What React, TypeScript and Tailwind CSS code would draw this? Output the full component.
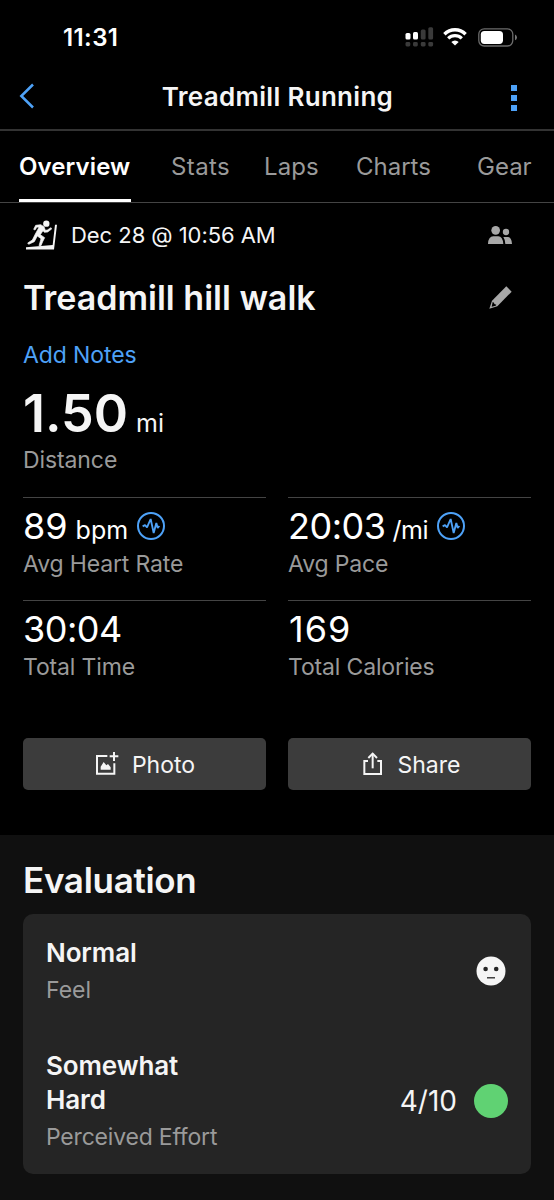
import type { ReactNode } from "react";

function SignalIcon() {
  return (
    <svg width="29" height="20" viewBox="0 0 29 20">
      <g fill="#fff">
        <rect x="0.5" y="6" width="5" height="6.5" rx="1.5" />
        <rect x="8" y="5" width="5" height="7.5" rx="1.5" />
      </g>
      <g fill="#3a3a3a">
        <rect x="15.8" y="2.5" width="4.8" height="10" rx="1.5" />
        <rect x="23.3" y="0.3" width="4.8" height="12.2" rx="1.5" />
        <rect x="0.5" y="15" width="4.8" height="4.5" rx="1.4" />
        <rect x="8" y="15" width="4.8" height="4.5" rx="1.4" />
        <rect x="15.8" y="15" width="4.8" height="4.5" rx="1.4" />
        <rect x="23.3" y="15" width="4.8" height="4.5" rx="1.4" />
      </g>
    </svg>
  );
}

function WifiIcon() {
  return (
    <svg width="24" height="18" viewBox="0 0 24 18" fill="none" stroke="#fff">
      <path d="M1.4 6.2 A15 15 0 0 1 22.6 6.2" strokeWidth="3.4" />
      <path d="M5.2 10.4 A9.8 9.8 0 0 1 18.8 10.4" strokeWidth="3.2" />
      <path d="M8.3 14 A5.2 5.2 0 0 1 15.7 14 L12 17.6 Z" fill="#fff" stroke="none" />
    </svg>
  );
}

function BatteryIcon() {
  return (
    <svg width="40" height="19" viewBox="0 0 40 19">
      <rect x="0.8" y="0.8" width="34" height="17.2" rx="5.4" fill="none" stroke="#6b6b6b" strokeWidth="1.3" />
      <rect x="2.8" y="2.9" width="22.2" height="13" rx="3.6" fill="#fff" />
      <path d="M37 6.5 Q39 7.4 39 9.4 Q39 11.4 37 12.3 Z" fill="#777" />
    </svg>
  );
}

function TreadmillIcon() {
  return (
    <svg width="34" height="32" viewBox="75 56 102 96" fill="#f5f5f5">
      <circle cx="139" cy="70" r="9.5" />
      <path d="M78 141 L158 134 L165 73 L171 73 L162 147.500 L78 147.500 Z" />
      <path
        d="M101 87 L107 75 L122 73 L132 79 L136 90 L142 89 L153 82 L155 86 L143 95 L133 96 L129 91 L121 103 L134 112 L128 124 L123 136 L117 136 L123 115 L112 107 L103 124 L86 132 L83 128 L97 119 L106 101 L117 81 L111 80 L105 89 Z"
        stroke="#f5f5f5"
        strokeWidth="2"
        strokeLinejoin="round"
      />
    </svg>
  );
}

function PeopleIcon() {
  return (
    <svg width="24" height="18" viewBox="0 0 72 54" fill="#a8a8a8">
      <circle cx="23" cy="13" r="13" />
      <path d="M0 54 Q1 31 16 31 H31 Q44 31 46 54 Z" />
      <circle cx="54" cy="18" r="9.5" />
      <path d="M46 33 H60 Q71 34 72 54 H52 Q51 40 46 33 Z" />
    </svg>
  );
}

function PencilIcon() {
  return (
    <svg width="23" height="23" viewBox="0 0 69 69">
      <path d="M52 1 L68 17 L25 61 L1 68 L9 44 Z" fill="#a8a8a8" />
      <path d="M11 48 L15 50 L16 54 L22 56 L20 59 L8 62 Z" fill="#000" />
    </svg>
  );
}

function PulseIcon() {
  return (
    <svg width="28" height="28" viewBox="0 0 84 84" fill="none" stroke="#4ea2f8">
      <circle cx="42" cy="42" r="39" strokeWidth="6" />
      <path
        d="M17 43 L24 39 L30 46 L41 21 L50 63 L58 33 L62 48 L67 42"
        strokeWidth="5.5"
        strokeLinejoin="bevel"
      />
    </svg>
  );
}

function AddPhotoIcon() {
  return (
    <svg width="24" height="24" viewBox="0 0 72 72">
      <path d="M34 12 H3 V65 H55 V34" fill="none" stroke="#f5f5f5" strokeWidth="6" />
      <path d="M54 0 V27 M41 13 H67" stroke="#f5f5f5" strokeWidth="6" />
      <path d="M14 53 V44 L23 30 L31 40 L36 36 L44 46 V53 Z" fill="#f5f5f5" />
    </svg>
  );
}

function ShareIcon() {
  return (
    <svg width="20" height="24" viewBox="0 0 60 72" fill="none" stroke="#f5f5f5" strokeWidth="6">
      <path d="M15 27 H4 V66 H54 V27 H43" />
      <path d="M29 49 V5" />
      <path d="M16 18 L29 5 L42 18" />
    </svg>
  );
}

function NeutralFace() {
  return (
    <svg width="30" height="30" viewBox="0 0 30 30">
      <circle cx="15" cy="15" r="14.500" fill="#f5f5f5" />
      <circle cx="9.600" cy="13" r="2.300" fill="#252525" />
      <circle cx="20.200" cy="13" r="2.300" fill="#252525" />
      <path d="M11 21.800 H19" stroke="#252525" strokeWidth="1.300" />
    </svg>
  );
}

function Metric({ label, children }: { label: ReactNode; children: ReactNode }) {
  return (
    <div className="h-[103px] border-t border-[#444444]">
      <div className="flex h-[56px] items-center text-[36px] leading-none text-white">{children}</div>
      <div className="flex h-[21px] items-center text-[23px] leading-none tracking-[-0.15px] text-[#9a9a9a]">{label}</div>
    </div>
  );
}

export default function App() {
  return (
    <div className="flex h-[1200px] w-[554px] flex-col overflow-hidden whitespace-nowrap bg-black font-['Inter',sans-serif] text-[#f5f5f5]">
      <div className="flex h-[64px] shrink-0 items-center pt-[10px] pl-[63px]">
        <span className="w-[342px] pt-[2px] text-[24px] leading-none font-semibold tracking-[0.4px] text-white">11:31</span>
        <SignalIcon />
        <span className="ml-[9px]"><WifiIcon /></span>
        <span className="ml-[11px]"><BatteryIcon /></span>
      </div>

      <header className="flex h-[67px] shrink-0 items-center justify-between border-b-2 border-[#333333] pt-[2px] pr-[37px] pl-[19px]">
        <svg className="mb-[3px]" width="16" height="26" viewBox="0 0 16 26" fill="none" stroke="#4ea2f8" strokeWidth="2.500">
          <path d="M14 1.500 L2.300 13 L14 24.500" />
        </svg>
        <h1 className="mb-[2px] ml-[9px] text-[26px] leading-none font-semibold tracking-[0.3px]">Treadmill Running</h1>
        <div className="flex flex-col gap-1">
          <i className="size-[6px] bg-[#4ea2f8]" />
          <i className="size-[6px] bg-[#4ea2f8]" />
          <i className="size-[6px] bg-[#4ea2f8]" />
        </div>
      </header>

      <nav className="flex h-[72px] shrink-0 border-b border-[#444444] pl-[19px] text-[24px] leading-none text-[#9a9a9a]">
        <div className="mr-[40px] flex w-[112px] items-center border-b-[3px] border-white pt-[3px] font-semibold tracking-[0.1px] text-white">
          Overview
        </div>
        <div className="flex w-[93px] items-center tracking-[0.4px]">Stats</div>
        <div className="flex w-[92px] items-center tracking-[0.1px]">Laps</div>
        <div className="flex w-[121px] items-center">Charts</div>
        <div className="flex items-center">Gear</div>
      </nav>

      <main className="flex shrink-0 flex-col px-[23px]">
        <div className="flex h-[64px] items-center pr-[19px] pl-[2px]">
          <TreadmillIcon />
          <span className="ml-[12px] grow text-[22px] leading-none tracking-[-0.05px]">Dec 28 @ 10:56 AM</span>
          <PeopleIcon />
        </div>
        <div className="flex h-[60px] items-center justify-between pt-px pr-[19px]">
          <h2 className="text-[34px] leading-none font-semibold">Treadmill hill walk</h2>
          <PencilIcon />
        </div>
        <div className="flex h-[56px] items-center text-[23px] leading-none tracking-[-0.1px] text-[#4ea2f8]">Add Notes</div>
        <div className="flex h-[60px] items-center pt-px text-[52px] leading-none font-semibold">
          <div>
            1.50<span className="ml-[8px] text-[25px] font-normal">mi</span>
          </div>
        </div>
        <div className="flex h-[34px] items-center text-[23px] leading-none tracking-[-0.1px] text-[#9a9a9a]">Distance</div>

        <div className="mt-[20px] grid grid-cols-2 gap-x-[22px]">
          <Metric label="Avg Heart Rate">
            <div>
              89<span className="ml-[8px] text-[25px]">bpm</span>
            </div>
            <span className="ml-[9px]"><PulseIcon /></span>
          </Metric>
          <Metric label="Avg Pace">
            <div>
              <span className="tracking-[-0.5px]">20:03</span>
              <span className="ml-[7px] text-[25px] tracking-[-0.4px]">/mi</span>
            </div>
            <span className="ml-[9px]"><PulseIcon /></span>
          </Metric>
          <Metric label="Total Time">
            <span className="tracking-[-0.5px]">30:04</span>
          </Metric>
          <Metric label="Total Calories">
            <span className="pl-px tracking-[1px]">169</span>
          </Metric>
        </div>

        <div className="mt-[35px] grid grid-cols-2 gap-x-[22px] text-[23px] leading-none">
          <button className="flex h-[52px] items-center justify-center gap-[12px] rounded-[5px] bg-[#3c3c3c] pl-[2px]">
            <AddPhotoIcon />
            <span className="pt-[2px]">Photo</span>
          </button>
          <button className="flex h-[52px] items-center justify-center gap-[15px] rounded-[5px] bg-[#3c3c3c] pl-[4px]">
            <ShareIcon />
            <span className="pt-[2px]">Share</span>
          </button>
        </div>
      </main>

      <section className="mt-[45px] grow bg-[#101010] px-[23px] pt-[20px]">
        <h2 className="flex h-[51px] items-center text-[35px] leading-none font-semibold tracking-[-0.3px]">Evaluation</h2>
        <div className="mt-[8px] h-[260px] rounded-[10px] bg-[#252525] pt-[22px] pl-[23px]">
          <div className="flex items-center justify-between pr-[25px]">
            <div>
              <div className="text-[26px] leading-[34px] font-semibold tracking-[-0.1px]">Normal</div>
              <div className="mt-[5px] text-[23px] leading-[31px] text-[#9a9a9a]">Feel</div>
            </div>
            <NeutralFace />
          </div>
          <div className="mt-[43px] flex items-center pr-[23px]">
            <div className="grow">
              <div className="text-[26px] leading-[34px] font-semibold tracking-[-0.1px]">
                Somewhat
                <br />
                Hard
              </div>
              <div className="mt-[5px] text-[23px] leading-[31px] tracking-[-0.2px] text-[#9a9a9a]">Perceived Effort</div>
            </div>
            <span className="text-[28px] leading-none">4/10</span>
            <i className="ml-[17px] size-[34px] rounded-full bg-[#60d273]" />
          </div>
        </div>
      </section>
    </div>
  );
}
